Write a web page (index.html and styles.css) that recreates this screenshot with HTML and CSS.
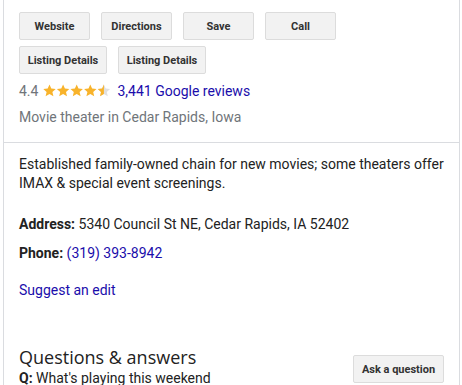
FILE: index.html
```html
<!DOCTYPE html>
<html>
<head>
<meta charset="utf-8">
<link rel="stylesheet" href="styles.css">
</head>
<body>
<div class="panel">
  <div class="top">
    <div class="btnrow">
      <span class="btn">Website</span>
      <span class="btn">Directions</span>
      <span class="btn">Save</span>
      <span class="btn">Call</span>
    </div>
    <div class="btnrow">
      <span class="btn wide">Listing Details</span>
      <span class="btn wide">Listing Details</span>
    </div>
    <div class="rating">
      <span class="score">4.4</span>
      <span class="stars">
        <svg width="68" height="13" viewBox="0 0 68 13">
          <defs>
            <path id="st" d="M6.5 0.5l1.8 4.1 4.4 0.4-3.3 2.9 1 4.4-3.9-2.3-3.9 2.3 1-4.4-3.3-2.9 4.4-0.4z"/>
            <clipPath id="half"><rect x="0" y="0" width="6.5" height="13"/></clipPath>
          </defs>
          <use href="#st" x="0" fill="#f8b32b"/>
          <use href="#st" x="13.6" fill="#f8b32b"/>
          <use href="#st" x="27.2" fill="#f8b32b"/>
          <use href="#st" x="40.8" fill="#f8b32b"/>
          <g transform="translate(54.4 0)">
            <use href="#st" fill="#e0e0e0"/>
            <use href="#st" fill="#f8b32b" clip-path="url(#half)"/>
          </g>
        </svg>
      </span>
      <a class="link">3,441 Google reviews</a>
    </div>
    <div class="type">Movie theater in Cedar Rapids, Iowa</div>
  </div>
  <div class="body">
    <p class="desc">Established family-owned chain for new movies; some theaters offer IMAX &amp; special event screenings.</p>
    <p class="attr"><b>Address:</b> 5340 Council St NE, Cedar Rapids, IA 52402</p>
    <p class="attr"><b>Phone:</b> <a class="link">(319) 393-8942</a></p>
    <p class="suggest"><a class="link">Suggest an edit</a></p>
    <div class="qa">
      <div class="qa-text">
        <div class="qa-title">Questions &amp; answers</div>
        <div class="qa-q"><b>Q:</b> What's playing this weekend</div>
      </div>
      <span class="btn ask">Ask a question</span>
    </div>
  </div>
</div>
</body>
</html>
```
FILE: styles.css
```css
html, body {
  margin: 0;
  padding: 0;
  background: #fff;
  height: 385px;
  overflow: hidden;
}
body {
  font-family: Roboto, "Liberation Sans", Arial, sans-serif;
  color: #222;
}
.panel {
  margin-left: 3px;
  width: 455px;
  min-height: 385px;
  border-left: 1px solid #dadce0;
  border-right: 1px solid #dadce0;
}
.top {
  padding: 12px 0 0 15px;
  height: 130px;
  border-bottom: 1px solid #dadce0;
}
.btnrow {
  display: flex;
  gap: 11px;
  margin-bottom: 6px;
}
.btn {
  display: inline-flex;
  align-items: center;
  justify-content: center;
  box-sizing: border-box;
  width: 71px;
  height: 28px;
  background: #f2f2f2;
  border: 1px solid #dcdcdc;
  border-radius: 2px;
  font-family: Roboto, "Liberation Sans", Arial, sans-serif;
  font-size: 11px;
  font-weight: 700;
  color: #333;
}
.btn.wide {
  width: 88px;
}
.rating {
  display: flex;
  align-items: center;
  height: 22px;
  margin-top: 6px;
  font-size: 14px;
}
.score {
  color: #70757a;
  margin-right: 5px;
}
.stars {
  display: inline-flex;
  margin-right: 6px;
  margin-top: -1px;
}
.link {
  color: #1a0dab;
  text-decoration: none;
}
.type {
  margin-top: 4px;
  font-size: 14px;
  color: #70757a;
  line-height: 22px;
}
.body {
  padding: 0 15px;
}
.desc {
  margin: 12px 0 0;
  font-size: 14px;
  line-height: 19px;
  width: 430px;
}
.attr {
  margin: 22px 0 0;
  font-size: 14px;
  line-height: 19px;
}
.attr + .attr {
  margin-top: 10px;
}
.attr b {
  font-weight: 700;
}
.suggest {
  margin: 18px 0 0;
  font-size: 14px;
  line-height: 19px;
}
.qa {
  display: flex;
  justify-content: space-between;
  align-items: flex-end;
  margin-top: 46px;
}
.qa-title {
  font-family: "Open Sans", "Noto Sans", sans-serif;
  font-size: 18px;
  line-height: 22px;
  color: #222;
}
.qa-q {
  font-size: 14px;
  line-height: 18px;
  margin-top: 1px;
}
.btn.ask {
  width: 91px;
  margin-bottom: 4px;
}
```
